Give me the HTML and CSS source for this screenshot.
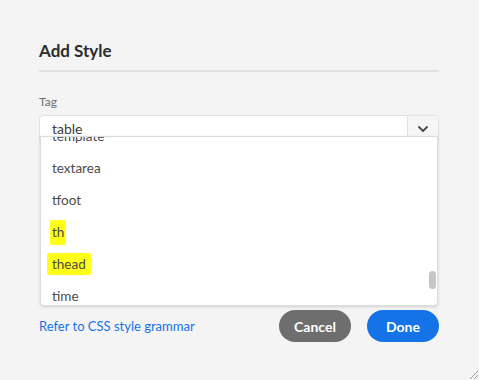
FILE: index.html
```html
<!DOCTYPE html>
<html lang="en">
<head>
    <meta charset="UTF-8">
    <meta name="viewport" content="width=device-width, initial-scale=1.0">
    <title>Add Style</title>
    <link rel="stylesheet" href="styles.css">
</head>
<body>
<div class="dialog">
    <h1 class="dialog-title">Add Style</h1>
    <div class="divider"></div>

    <label class="field-label">Tag</label>
    <div class="combo">
        <div class="combo-input">
            <span class="combo-value">table</span>
            <button class="combo-btn">
                <svg width="10" height="6" viewBox="0 0 10 6"><path d="M1 1l4 4 4-4" fill="none" stroke="#4b4b4b" stroke-width="1.8" stroke-linecap="round" stroke-linejoin="round"/></svg>
            </button>
        </div>

        <!-- open list -->
        <div class="combo-list">
            <ul class="options">
                <li>template</li>
                <li>textarea</li>
                <li>tfoot</li>
                <li><span class="mark mark-th">th</span></li>
                <li><span class="mark">thead</span></li>
                <li>time</li>
            </ul>
            <div class="scroll-thumb"></div>
        </div>
    </div>

    <div class="dialog-footer">
        <a href="#" class="grammar-link">Refer to CSS style grammar</a>
        <div class="actions">
            <button class="btn btn-cancel">Cancel</button>
            <button class="btn btn-done">Done</button>
        </div>
    </div>
</div>
<div class="resize-grip"></div>
</body>
</html>
```

FILE: styles.css
```css
body {
    margin: 0;
    padding: 0;
    background-color: #f4f4f4;
    font-family: Lato, "Open Sans", sans-serif;
    color: #4b4b4b;
    height: 380px;
    overflow: hidden;
    position: relative;
}
.dialog {
    padding: 40px 40px 0 39px;
}
.dialog-title {
    margin: 0;
    font-size: 17px;
    line-height: 22px;
    font-weight: 700;
    color: #2c2c2c;
}
.divider {
    height: 2px;
    background-color: #e1e1e1;
    margin-top: 8px;
}
.field-label {
    display: block;
    margin-top: 22px;
    font-size: 12px;
    line-height: 16px;
    color: #6e6e6e;
}
.combo {
    position: relative;
    margin-top: 5px;
}
.combo-input {
    display: flex;
    height: 26px;
    background-color: white;
    border: 1px solid #e1e1e1;
    border-radius: 4px;
}
.combo-value {
    flex: 1;
    padding-left: 12px;
    font-size: 14px;
    line-height: 26px;
    color: #3c3c3c;
}
.combo-btn {
    display: flex;
    align-items: center;
    justify-content: center;
    width: 31px;
    background-color: #f6f6f6;
    border: none;
    border-left: 1px solid #e1e1e1;
    border-radius: 0 4px 4px 0;
    padding: 0;
    cursor: pointer;
}
.combo-list {
    position: absolute;
    top: 21px;
    left: 1px;
    right: 1px;
    height: 168px;
    background-color: white;
    border: 1px solid #dcdcdc;
    border-radius: 0 0 4px 4px;
    box-shadow: 0 1px 3px rgba(0, 0, 0, 0.15);
    overflow: hidden;
    z-index: 10;
}
.options {
    list-style: none;
    margin: -17px 0 0;
    padding: 0;
}
.options li {
    height: 32px;
    line-height: 32px;
    padding-left: 11px;
    font-size: 13.5px;
    color: #4b4b4b;
}
.mark {
    background-color: #ffff1a;
    padding: 3px 5px;
    margin-left: -5px;
    border-radius: 2px;
}
.mark-th {
    padding: 4px 2px 5px;
    margin-left: -2px;
}
.scroll-thumb {
    position: absolute;
    right: 1px;
    top: 134px;
    width: 7px;
    height: 18px;
    background-color: #c6c6c6;
    border-radius: 4px;
}
.dialog-footer {
    display: flex;
    justify-content: space-between;
    align-items: center;
    margin-top: 167px;
}
.grammar-link {
    color: #1473e6;
    text-decoration: none;
    font-size: 13px;
}
.actions {
    display: flex;
    gap: 16px;
}
.btn {
    height: 32px;
    width: 72px;
    border: none;
    border-radius: 16px;
    color: white;
    font-family: Lato, "Open Sans", sans-serif;
    font-size: 14px;
    font-weight: 700;
    cursor: pointer;
}
.btn-cancel {
    background-color: #6e6e6e;
}
.btn-done {
    background-color: #1473e6;
}
.resize-grip {
    position: absolute;
    right: 1px;
    bottom: 1px;
    width: 8px;
    height: 8px;
    background: linear-gradient(135deg, transparent 45%, #9a9a9a 45%, #9a9a9a 55%, transparent 55%, transparent 70%, #9a9a9a 70%, #9a9a9a 80%, transparent 80%);
}
```
